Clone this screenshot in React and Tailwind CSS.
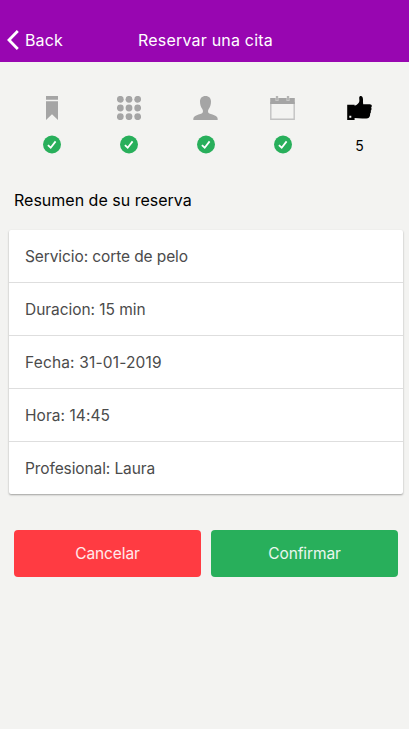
const BookmarkIcon = () => (
  <svg viewBox="0 0 24 24" className="h-6 w-6" fill="currentColor">
    <path d="M6 0h12v3.8H6zM6 5.2h12V24l-6-5.800L6 24z" />
  </svg>
);

const GridIcon = () => (
  <svg viewBox="0 0 24 24" className="h-6 w-6" fill="currentColor">
    {[3.3, 12, 20.7].map((y) =>
      [3.3, 12, 20.7].map((x) => (
        <circle key={`${x}-${y}`} cx={x} cy={y} r="3.4" />
      ))
    )}
  </svg>
);

const PersonIcon = () => (
  <svg viewBox="0 0 24 24" className="h-6 w-[25px]" fill="currentColor">
    <path d="M12 0c3.600 0 5.600 2.300 5.500 5.800 0 2.800-.9 5.500-2.300 7.300-1 1.300-1 3.700.6 4.500 1.700.8 4.700 1.200 6.500 2.500 1.500.8 1.900 1.900 1.900 3.900H-.2c0-2 .4-3.100 1.900-3.900 1.800-1.300 4.800-1.700 6.500-2.500 1.600-.8 1.600-3.200.6-4.500C7.400 11.300 6.500 8.600 6.500 5.800 6.400 2.300 8.400 0 12 0z" />
  </svg>
);

const CalendarIcon = () => (
  <svg viewBox="0 0 25 24" className="h-6 w-[25px]" fill="currentColor">
    <path d="M.8 6v17.300h23.400V6" fill="none" stroke="#c2c2c2" strokeWidth="1.400" />
    <path d="M.2 2h24.600v6H.2z" />
    <path d="M5.600 0h2.800v5H5.600zM16.600 0h2.800v5h-2.800z" fill="#d9d9d8" />
    <path d="M6.300 0h1.400v4.600H6.300zM17.300 0h1.400v4.600h-1.400z" />
  </svg>
);

const ThumbIcon = () => (
  <svg viewBox="0 0 25 24" className="h-6 w-[25px]" fill="currentColor">
    <path
      fillRule="evenodd"
      d="M.2 8.800h7.400v1c2.600-1 4.600-2.600 4.800-4.800l-.2-3C12.200.6 12.900 0 13.800 0c1.500 0 2.100 1.400 2.200 3.400 0 1.800-.1 3.200.2 4.800h6.600c1.300 0 2 .7 2 1.800 0 .8-.4 1.300-.7 1.600.4.500.5 1 .4 1.700-.1.700-.4 1.200-.8 1.500.2.500.3 1 .1 1.600-.1.600-.4 1.100-.8 1.300.2.500.2 1.100 0 1.700-.4 2-1.600 2.800-3.600 3-4 .4-8.200.1-11.800-.3V24H.2zM2.300 19.700v2h2v-2z"
    />
  </svg>
);

const CheckBadge = () => (
  <svg viewBox="0 0 18 19" className="h-[19px] w-[18px]">
    <circle cx="9" cy="9.500" r="9" fill="#28af5b" />
    <path
      d="M4.900 10.100l2.800 2.600 4.900-6.300"
      fill="none"
      stroke="#fff"
      strokeWidth="1.800"
    />
  </svg>
);

const steps = [
  { icon: BookmarkIcon, done: true },
  { icon: GridIcon, done: true },
  { icon: PersonIcon, done: true },
  { icon: CalendarIcon, done: true },
  { icon: ThumbIcon, done: false },
];

const details = [
  { text: "Servicio: corte de pelo", tracking: "tracking-[-0.1px]" },
  { text: "Duracion: 15 min", tracking: "tracking-[-0.05px]" },
  { text: "Fecha: 31-01-2019", tracking: "tracking-[0.16px]" },
  { text: "Hora: 14:45", tracking: "tracking-[0.05px]" },
  { text: "Profesional: Laura", tracking: "tracking-[-0.1px]" },
];

export default function App() {
  return (
    <div className="min-h-screen bg-[#f3f3f1] font-[Inter,sans-serif]">
      {/* HEADER */}
      <header className="grid h-[62px] grid-cols-[1fr_auto_1fr] items-center bg-[#9806b1] pr-[5px] pl-[7px] pt-[18px] text-white">
        <button className="flex items-center gap-[6px] text-[16px] tracking-[0.1px]">
          <svg viewBox="0 0 12 20" className="h-5 w-3">
            <path
              d="M10.800 1L2 10l8.800 9"
              fill="none"
              stroke="currentColor"
              strokeWidth="2.800"
            />
          </svg>
          Back
        </button>
        <h1 className="text-[16px] tracking-[0.2px]">Reservar una cita</h1>
      </header>

      {/* STEPS */}
      <div className="ml-[13px] grid w-[385px] grid-cols-5 pt-[34px]">
        {steps.map(({ icon: Icon, done }, i) => (
          <div
            key={i}
            className={`flex flex-col items-center ${done ? "text-[#a5a5a5]" : "text-black"}`}
          >
            <Icon />
            <div className="mt-[15px] flex h-[19px] items-center text-[14px]">
              {done ? <CheckBadge /> : <span className="pt-px">{i + 1}</span>}
            </div>
          </div>
        ))}
      </div>

      <h2 className="mt-[34px] ml-[14px] text-[16px] leading-6 text-black">
        Resumen de su reserva
      </h2>

      {/* SUMMARY */}
      <ul className="mt-[18px] mr-[6px] ml-[9px] divide-y divide-[#dedede] rounded-[2px] bg-white text-[15.5px] text-[#4b4b4b] shadow-[0_1px_2px_rgba(0,0,0,0.35)]">
        {details.map(({ text, tracking }) => (
          <li
            key={text}
            className={`flex h-[53px] items-center px-4 pt-px last:h-[52px] ${tracking}`}
          >
            {text}
          </li>
        ))}
      </ul>

      {/* ACTIONS */}
      <div className="mt-[36px] mr-[11px] ml-[14px] grid grid-cols-2 gap-[10px] text-[15.5px] tracking-[-0.1px] text-white/90">
        <button className="h-[47px] rounded bg-[#ff3b42] pt-px">Cancelar</button>
        <button className="h-[47px] rounded bg-[#28af5b] pt-px">Confirmar</button>
      </div>
    </div>
  );
}
